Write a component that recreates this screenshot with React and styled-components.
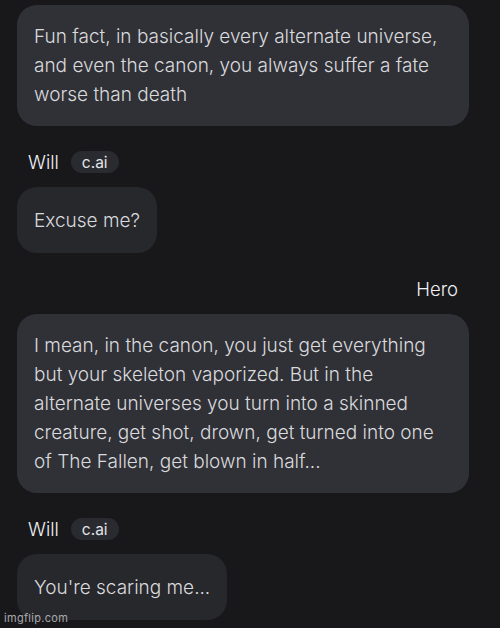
import React from 'react'
import styled, { createGlobalStyle } from 'styled-components'

const GlobalStyle = createGlobalStyle`
  html, body {
    margin: 0;
    padding: 0;
    background: #18181b;
  }
  body {
    font-family: Inter, "Noto Sans", sans-serif;
    -webkit-font-smoothing: antialiased;
  }
`

const messages = [
  {
    from: 'user',
    text: 'Fun fact, in basically every alternate universe, and even the canon, you always suffer a fate worse than death',
  },
  { from: 'bot', name: 'Will', text: 'Excuse me?' },
  {
    from: 'user',
    name: 'Hero',
    text: 'I mean, in the canon, you just get everything but your skeleton vaporized. But in the alternate universes you turn into a skinned creature, get shot, drown, get turned into one of The Fallen, get blown in half...',
  },
  { from: 'bot', name: 'Will', text: "You're scaring me..." },
]

export default function App() {
  return (
    <Page>
      <GlobalStyle />
      <Thread>
        {messages.map((m, i) => (
          <Message key={i} $mine={m.from === 'user'}>
            {m.name && (
              <Header $mine={m.from === 'user'}>
                <Name>{m.name}</Name>
                {m.from === 'bot' && <Tag>c.ai</Tag>}
              </Header>
            )}
            <Bubble $mine={m.from === 'user'}>{m.text}</Bubble>
          </Message>
        ))}
      </Thread>
      <Watermark>imgflip.com</Watermark>
    </Page>
  )
}

const Page = styled.div`
  position: relative;
  width: 500px;
  height: 628px;
  overflow: hidden;
  background: #18181b;
`

const Thread = styled.div`
  display: flex;
  flex-direction: column;
  gap: 25px;
  padding: 5px 31px 0 17px;
`

const Message = styled.div`
  display: flex;
  flex-direction: column;
  align-items: ${p => (p.$mine ? 'stretch' : 'flex-start')};
  gap: 14px;
`

const Header = styled.div`
  display: flex;
  align-items: center;
  justify-content: ${p => (p.$mine ? 'flex-end' : 'flex-start')};
  gap: 12px;
  height: 22px;
  padding: 0 11px;
`

const Name = styled.span`
  color: #f0f0f2;
  font-size: 18.5px;
  font-weight: 300;
  line-height: 22px;
`

const Tag = styled.span`
  display: inline-flex;
  align-items: center;
  height: 22px;
  padding: 0 11px;
  border-radius: 11px;
  background: #2a2b30;
  color: #e4e4e7;
  font-size: 15.5px;
`

const Bubble = styled.div`
  display: flex;
  align-items: center;
  box-sizing: border-box;
  min-height: 66px;
  padding: 17px;
  border-radius: 20px;
  background: ${p => (p.$mine ? '#303136' : '#27282c')};
  color: #dadade;
  font-size: 19px;
  font-weight: 300;
  line-height: 29px;
`

const Watermark = styled.div`
  position: absolute;
  left: 4px;
  bottom: 3px;
  color: #a8a8ad;
  font-size: 11px;
  letter-spacing: 0.3px;
`
